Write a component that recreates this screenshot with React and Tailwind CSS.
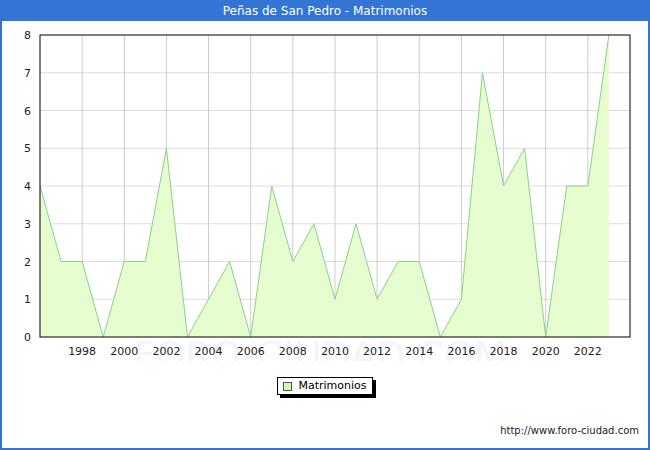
export default function App(){
const d=[4,2,2,0,2,2,5,0,1,2,0,4,2,3,1,3,1,2,2,0,1,7,4,5,0,4,4,8];
const X=i=>40+i*21.07, Y=v=>337-v*37.75;
const pts=d.map((v,i)=>`${X(i)},${Y(v)}`).join(' ');
const area=`${X(0)},337 ${pts} ${X(27)},337`;
const years=[1998,2000,2002,2004,2006,2008,2010,2012,2014,2016,2018,2020,2022];
return(
<div className="w-[650px] h-[450px] bg-white border-x-2 border-b-2 border-[#3474d4] flex flex-col" style={{fontFamily:'"DejaVu Sans",sans-serif'}}>
<div className="h-[21px] bg-[#3474d4] text-white text-[12px] flex items-center justify-center shrink-0">Peñas de San Pedro - Matrimonios</div>
<div className="relative h-[340px]">
<svg width="648" height="340" className="absolute left-[-2px] top-0" viewBox="0 21 648 340" fontFamily="DejaVu Sans" fontSize="11">
<text x="320" y="368" textAnchor="middle" fontSize="38" fill="#f3f5f9" fontFamily="DejaVu Sans">FORO-CIUDAD.COM</text>
{[1,2,3,4,5,6,7].map(v=><line key={v} x1="40" x2="630" y1={Y(v)} y2={Y(v)} stroke="#dddddd"/>)}
{years.map(y=><line key={y} x1={X(y-1996)} x2={X(y-1996)} y1="35" y2="337" stroke="#cccccc"/>)}
<polygon points={area} fill="#e6fdd0"/>
<polyline points={pts} fill="none" stroke="#8ccf8c" strokeWidth="1"/>
<rect x="40" y="35" width="590" height="302" fill="none" stroke="#000"/>
{[0,1,2,3,4,5,6,7,8].map(v=><text key={v} x="31" y={Y(v)+4} textAnchor="end" fill="#222">{v}</text>)}
{years.map(y=><text key={y} x={X(y-1996)} y="355" textAnchor="middle" fill="#222">{y}</text>)}
</svg>
</div>
<div className="flex justify-center mt-[16px]">
<div className="flex items-center gap-[6px] border border-black px-[5px] h-[18px] text-[11px] shadow-[3px_3px_0_#000] bg-white">
<span className="w-[9px] h-[9px] bg-[#cfffa0] border border-gray-600"></span>Matrimonios</div>
</div>
<div className="mt-auto mb-[10px] text-right pr-[9px] text-[10px] text-[#222]">http://www.foro-ciudad.com</div>
</div>);
}
